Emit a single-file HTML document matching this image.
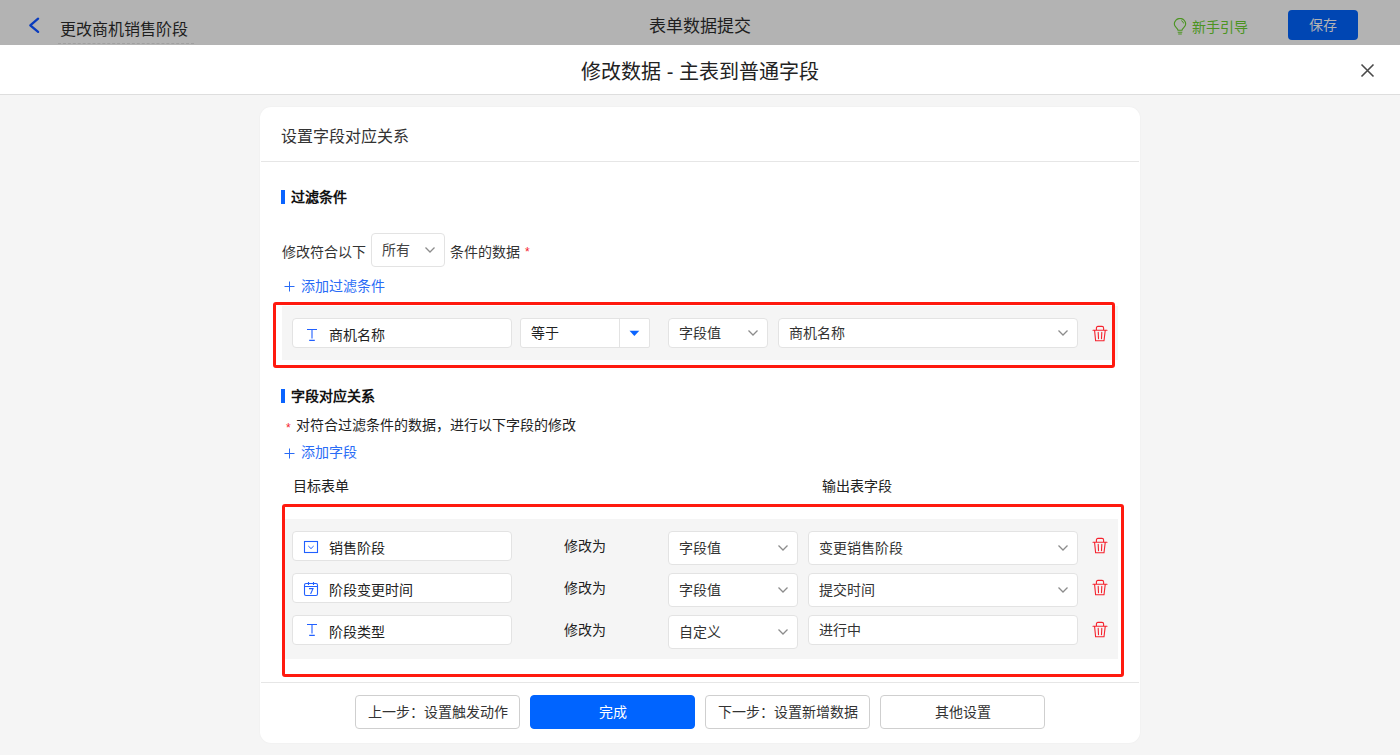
<!DOCTYPE html>
<html lang="zh-CN"><head><meta charset="utf-8">
<style>
*{box-sizing:border-box;margin:0;padding:0}
html,body{width:1400px;height:755px;overflow:hidden}
body{background:#f5f5f5;font-family:"Liberation Sans",sans-serif;color:#333;font-size:14px;position:relative}
.a{position:absolute;white-space:nowrap}
.t{line-height:20px;height:20px}
#top{left:0;top:0;width:1400px;height:45px;background:#b3b3b3}
#mh{left:0;top:45px;width:1400px;height:50px;background:#fff;border-bottom:1px solid #dedede}
#card{left:260px;top:107px;width:880px;height:636px;background:#fff;border-radius:11px;box-shadow:0 0 2px rgba(0,0,0,0.05)}
.box{position:absolute;background:#fff;border:1px solid #e3e3e3;border-radius:4px}
.chev{position:absolute;width:10px;height:6px}
.red{position:absolute;border:3px solid #ff1a0f;border-radius:3px}
.gray{position:absolute;background:#f5f5f5}
.bar{position:absolute;width:4px;height:14px;background:#0a64ff}
.btn{position:absolute;top:695px;height:34px;width:165px;border:1px solid #cfcfcf;border-radius:4px;background:#fff;text-align:center;line-height:32px;font-size:14px;color:#333}
</style></head><body>

<div id="top" class="a">
  <svg class="a" style="left:28px;top:17px" width="13" height="18" viewBox="0 0 13 18"><path d="M10.1 1.7 L2.3 8.3 L10.1 14.9" fill="none" stroke="#0a3cbe" stroke-width="2.3" stroke-linecap="round" stroke-linejoin="round"/></svg>
  <div class="a t" style="left:60px;top:20px;font-size:16px;color:#1e1e1e">更改商机销售阶段</div>
  <div class="a" style="left:58px;top:43px;width:136px;height:1px;border-top:1px dashed #a0a0a0"></div>
  <div class="a t" style="left:0;width:1400px;text-align:center;top:17px;font-size:17px;color:#1e1e1e">表单数据提交</div>
  <svg class="a" style="left:1173px;top:18px" width="14" height="18" viewBox="0 0 14 18"><path d="M5 12.3C5 10.4 1.3 9 1.3 6.1A5.7 5.7 0 0 1 12.7 6.1C12.7 9 9 10.4 9 12.3Z" fill="none" stroke="#4b9421" stroke-width="1.1"/><path d="M4.7 14.2H9.3M5.2 16H8.8" stroke="#4b9421" stroke-width="1.1"/><path d="M8.3 2.6Q10.2 3.4 10.6 5.4" fill="none" stroke="#4b9421" stroke-width="1"/></svg>
  <div class="a t" style="left:1192px;top:17px;font-size:14px;color:#4b9421">新手引导</div>
  <div class="a" style="left:1288px;top:10px;width:70px;height:30px;background:#0046b3;border-radius:4px;color:#b3b3b3;text-align:center;line-height:30px;font-size:14px">保存</div>
</div>

<div id="mh" class="a">
  <div class="a" style="left:0;width:1400px;text-align:center;top:14px;line-height:26px;font-size:20px;color:#222">修改数据 - 主表到普通字段</div>
  <svg class="a" style="left:1360px;top:18px" width="15" height="15" viewBox="0 0 15 15"><path d="M1.5 1.5L13.5 13.5M13.5 1.5L1.5 13.5" stroke="#4a4a4a" stroke-width="1.6"/></svg>
</div>

<div id="card" class="a"></div>
<div class="a t" style="left:281px;top:127px;font-size:16px;color:#333">设置字段对应关系</div>
<div class="a" style="left:261px;top:161px;width:878px;height:1px;background:#e6e6e6"></div>

<!-- section 1 -->
<div class="bar" style="left:281px;top:190px"></div>
<div class="a t" style="left:291px;top:187px;font-weight:bold;color:#111">过滤条件</div>

<div class="a t" style="left:282px;top:242px;color:#333">修改符合以下</div>
<div class="box" style="left:371px;top:233px;width:74px;height:34px"></div>
<div class="a t" style="left:382px;top:240px;color:#444">所有</div>
<svg class="chev" style="left:425px;top:247px" viewBox="0 0 10 6"><path d="M0.5 0.5L5 5L9.5 0.5" fill="none" stroke="#8c8c8c" stroke-width="1.25"/></svg>
<div class="a t" style="left:450px;top:242px;color:#333">条件的数据</div>
<div class="a" style="left:525px;top:246px;font-size:12px;line-height:12px;color:#f5222d">*</div>

<svg class="a" style="left:284px;top:281px" width="11" height="11" viewBox="0 0 11 11"><path d="M5.5 0.5V10.5M0.5 5.5H10.5" stroke="#2a6cf6" stroke-width="1"/></svg>
<div class="a t" style="left:301px;top:276px;color:#2a6cf6">添加过滤条件</div>

<div class="gray" style="left:282px;top:306px;width:836px;height:54px"></div>
<div class="red" style="left:273px;top:302px;width:842px;height:66px"></div>

<div class="box" style="left:292px;top:318px;width:220px;height:30px"></div>
<svg class="a" style="left:306px;top:328px" width="12" height="14" viewBox="0 0 12 14"><path d="M1 1.5H11M6 1.5V10.5M3.2 12.4H8.8" fill="none" stroke="#2160ff" stroke-width="1.1"/></svg>
<div class="a t" style="left:329px;top:325px;color:#222">商机名称</div>

<div class="box" style="left:520px;top:318px;width:130px;height:30px;border-radius:3px 2px 2px 3px"></div>
<div class="a" style="left:619px;top:319px;width:1px;height:28px;background:#e3e3e3"></div>
<div class="a t" style="left:531px;top:323px;color:#222">等于</div>
<svg class="a" style="left:629px;top:330px" width="11" height="7" viewBox="0 0 11 7"><path d="M0.5 0.8H10.3L5.4 6Z" fill="#0a64ff"/></svg>

<div class="box" style="left:668px;top:318px;width:100px;height:30px"></div>
<div class="a t" style="left:679px;top:323px;color:#333">字段值</div>
<svg class="chev" style="left:748px;top:330px" viewBox="0 0 10 6"><path d="M0.5 0.5L5 5L9.5 0.5" fill="none" stroke="#8c8c8c" stroke-width="1.25"/></svg>

<div class="box" style="left:778px;top:318px;width:300px;height:30px"></div>
<div class="a t" style="left:789px;top:323px;color:#333">商机名称</div>
<svg class="chev" style="left:1058px;top:330px" viewBox="0 0 10 6"><path d="M0.5 0.5L5 5L9.5 0.5" fill="none" stroke="#8c8c8c" stroke-width="1.25"/></svg>

<svg class="a trash" style="left:1092px;top:325px" width="16" height="17" viewBox="0 0 16 17"><path d="M1 5.3H15M4.4 5.3V3Q4.4 1.4 6 1.4H10Q11.6 1.4 11.6 3V5.3M2.6 5.6L3.6 15.7H12L13.2 5.6M6.2 7.4L6.5 13.6M9.8 7.4L9.5 13.6" fill="none" stroke="#f5222d" stroke-width="1.1" stroke-linecap="round"/></svg>

<!-- section 2 -->
<div class="bar" style="left:281px;top:389px"></div>
<div class="a t" style="left:291px;top:386px;font-weight:bold;color:#111">字段对应关系</div>
<div class="a" style="left:286px;top:422px;font-size:12px;line-height:12px;color:#f5222d">*</div>
<div class="a t" style="left:296px;top:415px;color:#222">对符合过滤条件的数据，进行以下字段的修改</div>
<svg class="a" style="left:284px;top:448px" width="11" height="11" viewBox="0 0 11 11"><path d="M5.5 0.5V10.5M0.5 5.5H10.5" stroke="#2a6cf6" stroke-width="1"/></svg>
<div class="a t" style="left:301px;top:442px;color:#2a6cf6">添加字段</div>
<div class="a t" style="left:293px;top:476px;color:#222">目标表单</div>
<div class="a t" style="left:822px;top:476px;color:#222">输出表字段</div>

<div class="gray" style="left:285px;top:519px;width:833px;height:140px"></div>
<div class="red" style="left:282px;top:504px;width:842px;height:173px"></div>

<!-- row 1 -->
<div class="box" style="left:292px;top:531px;width:220px;height:30px"></div>
<svg class="a" style="left:303px;top:540px" width="16" height="14" viewBox="0 0 16 14"><rect x="1.5" y="1.5" width="13" height="11" fill="none" stroke="#2160ff" stroke-width="1.1"/><path d="M5.3 6L8 8.6L10.7 6" fill="none" stroke="#2160ff" stroke-width="1"/></svg>
<div class="a t" style="left:329px;top:538px;color:#222">销售阶段</div>
<div class="a t" style="left:564px;top:536px;color:#222">修改为</div>
<div class="box" style="left:668px;top:531px;width:130px;height:34px"></div>
<div class="a t" style="left:679px;top:538px;color:#333">字段值</div>
<svg class="chev" style="left:778px;top:545px" viewBox="0 0 10 6"><path d="M0.5 0.5L5 5L9.5 0.5" fill="none" stroke="#8c8c8c" stroke-width="1.25"/></svg>
<div class="box" style="left:808px;top:531px;width:270px;height:34px"></div>
<div class="a t" style="left:819px;top:538px;color:#333">变更销售阶段</div>
<svg class="chev" style="left:1058px;top:545px" viewBox="0 0 10 6"><path d="M0.5 0.5L5 5L9.5 0.5" fill="none" stroke="#8c8c8c" stroke-width="1.25"/></svg>
<svg class="a trash" style="left:1092px;top:537px" width="16" height="17" viewBox="0 0 16 17"><path d="M1 5.3H15M4.4 5.3V3Q4.4 1.4 6 1.4H10Q11.6 1.4 11.6 3V5.3M2.6 5.6L3.6 15.7H12L13.2 5.6M6.2 7.4L6.5 13.6M9.8 7.4L9.5 13.6" fill="none" stroke="#f5222d" stroke-width="1.1" stroke-linecap="round"/></svg>

<!-- row 2 -->
<div class="box" style="left:292px;top:573px;width:220px;height:30px"></div>
<svg class="a" style="left:303px;top:581px" width="16" height="16" viewBox="0 0 16 16"><rect x="1.5" y="2.5" width="13" height="12" rx="1.5" fill="none" stroke="#2160ff" stroke-width="1.1"/><path d="M1.5 5.5H14.5M5.5 1V4M10.5 1V4" fill="none" stroke="#2160ff" stroke-width="1.1"/><path d="M6 7.6H10L7.6 13" fill="none" stroke="#2160ff" stroke-width="1.1"/></svg>
<div class="a t" style="left:329px;top:580px;color:#222">阶段变更时间</div>
<div class="a t" style="left:564px;top:578px;color:#222">修改为</div>
<div class="box" style="left:668px;top:573px;width:130px;height:34px"></div>
<div class="a t" style="left:679px;top:580px;color:#333">字段值</div>
<svg class="chev" style="left:778px;top:587px" viewBox="0 0 10 6"><path d="M0.5 0.5L5 5L9.5 0.5" fill="none" stroke="#8c8c8c" stroke-width="1.25"/></svg>
<div class="box" style="left:808px;top:573px;width:270px;height:34px"></div>
<div class="a t" style="left:819px;top:580px;color:#333">提交时间</div>
<svg class="chev" style="left:1058px;top:587px" viewBox="0 0 10 6"><path d="M0.5 0.5L5 5L9.5 0.5" fill="none" stroke="#8c8c8c" stroke-width="1.25"/></svg>
<svg class="a trash" style="left:1092px;top:579px" width="16" height="17" viewBox="0 0 16 17"><path d="M1 5.3H15M4.4 5.3V3Q4.4 1.4 6 1.4H10Q11.6 1.4 11.6 3V5.3M2.6 5.6L3.6 15.7H12L13.2 5.6M6.2 7.4L6.5 13.6M9.8 7.4L9.5 13.6" fill="none" stroke="#f5222d" stroke-width="1.1" stroke-linecap="round"/></svg>

<!-- row 3 -->
<div class="box" style="left:292px;top:615px;width:220px;height:30px"></div>
<svg class="a" style="left:306px;top:623px" width="12" height="14" viewBox="0 0 12 14"><path d="M1 1.5H11M6 1.5V10.5M3.2 12.4H8.8" fill="none" stroke="#2160ff" stroke-width="1.1"/></svg>
<div class="a t" style="left:329px;top:622px;color:#222">阶段类型</div>
<div class="a t" style="left:564px;top:620px;color:#222">修改为</div>
<div class="box" style="left:668px;top:615px;width:130px;height:34px"></div>
<div class="a t" style="left:679px;top:622px;color:#333">自定义</div>
<svg class="chev" style="left:778px;top:629px" viewBox="0 0 10 6"><path d="M0.5 0.5L5 5L9.5 0.5" fill="none" stroke="#8c8c8c" stroke-width="1.25"/></svg>
<div class="box" style="left:808px;top:615px;width:270px;height:30px"></div>
<div class="a t" style="left:819px;top:620px;color:#333">进行中</div>
<svg class="a trash" style="left:1092px;top:621px" width="16" height="17" viewBox="0 0 16 17"><path d="M1 5.3H15M4.4 5.3V3Q4.4 1.4 6 1.4H10Q11.6 1.4 11.6 3V5.3M2.6 5.6L3.6 15.7H12L13.2 5.6M6.2 7.4L6.5 13.6M9.8 7.4L9.5 13.6" fill="none" stroke="#f5222d" stroke-width="1.1" stroke-linecap="round"/></svg>

<!-- footer -->
<div class="a" style="left:261px;top:682px;width:878px;height:1px;background:#e6e6e6"></div>
<div class="btn" style="left:355px">上一步：设置触发动作</div>
<div class="btn" style="left:530px;background:#0064ff;border-color:#0064ff;color:#fff">完成</div>
<div class="btn" style="left:705px">下一步：设置新增数据</div>
<div class="btn" style="left:880px">其他设置</div>

</body></html>
